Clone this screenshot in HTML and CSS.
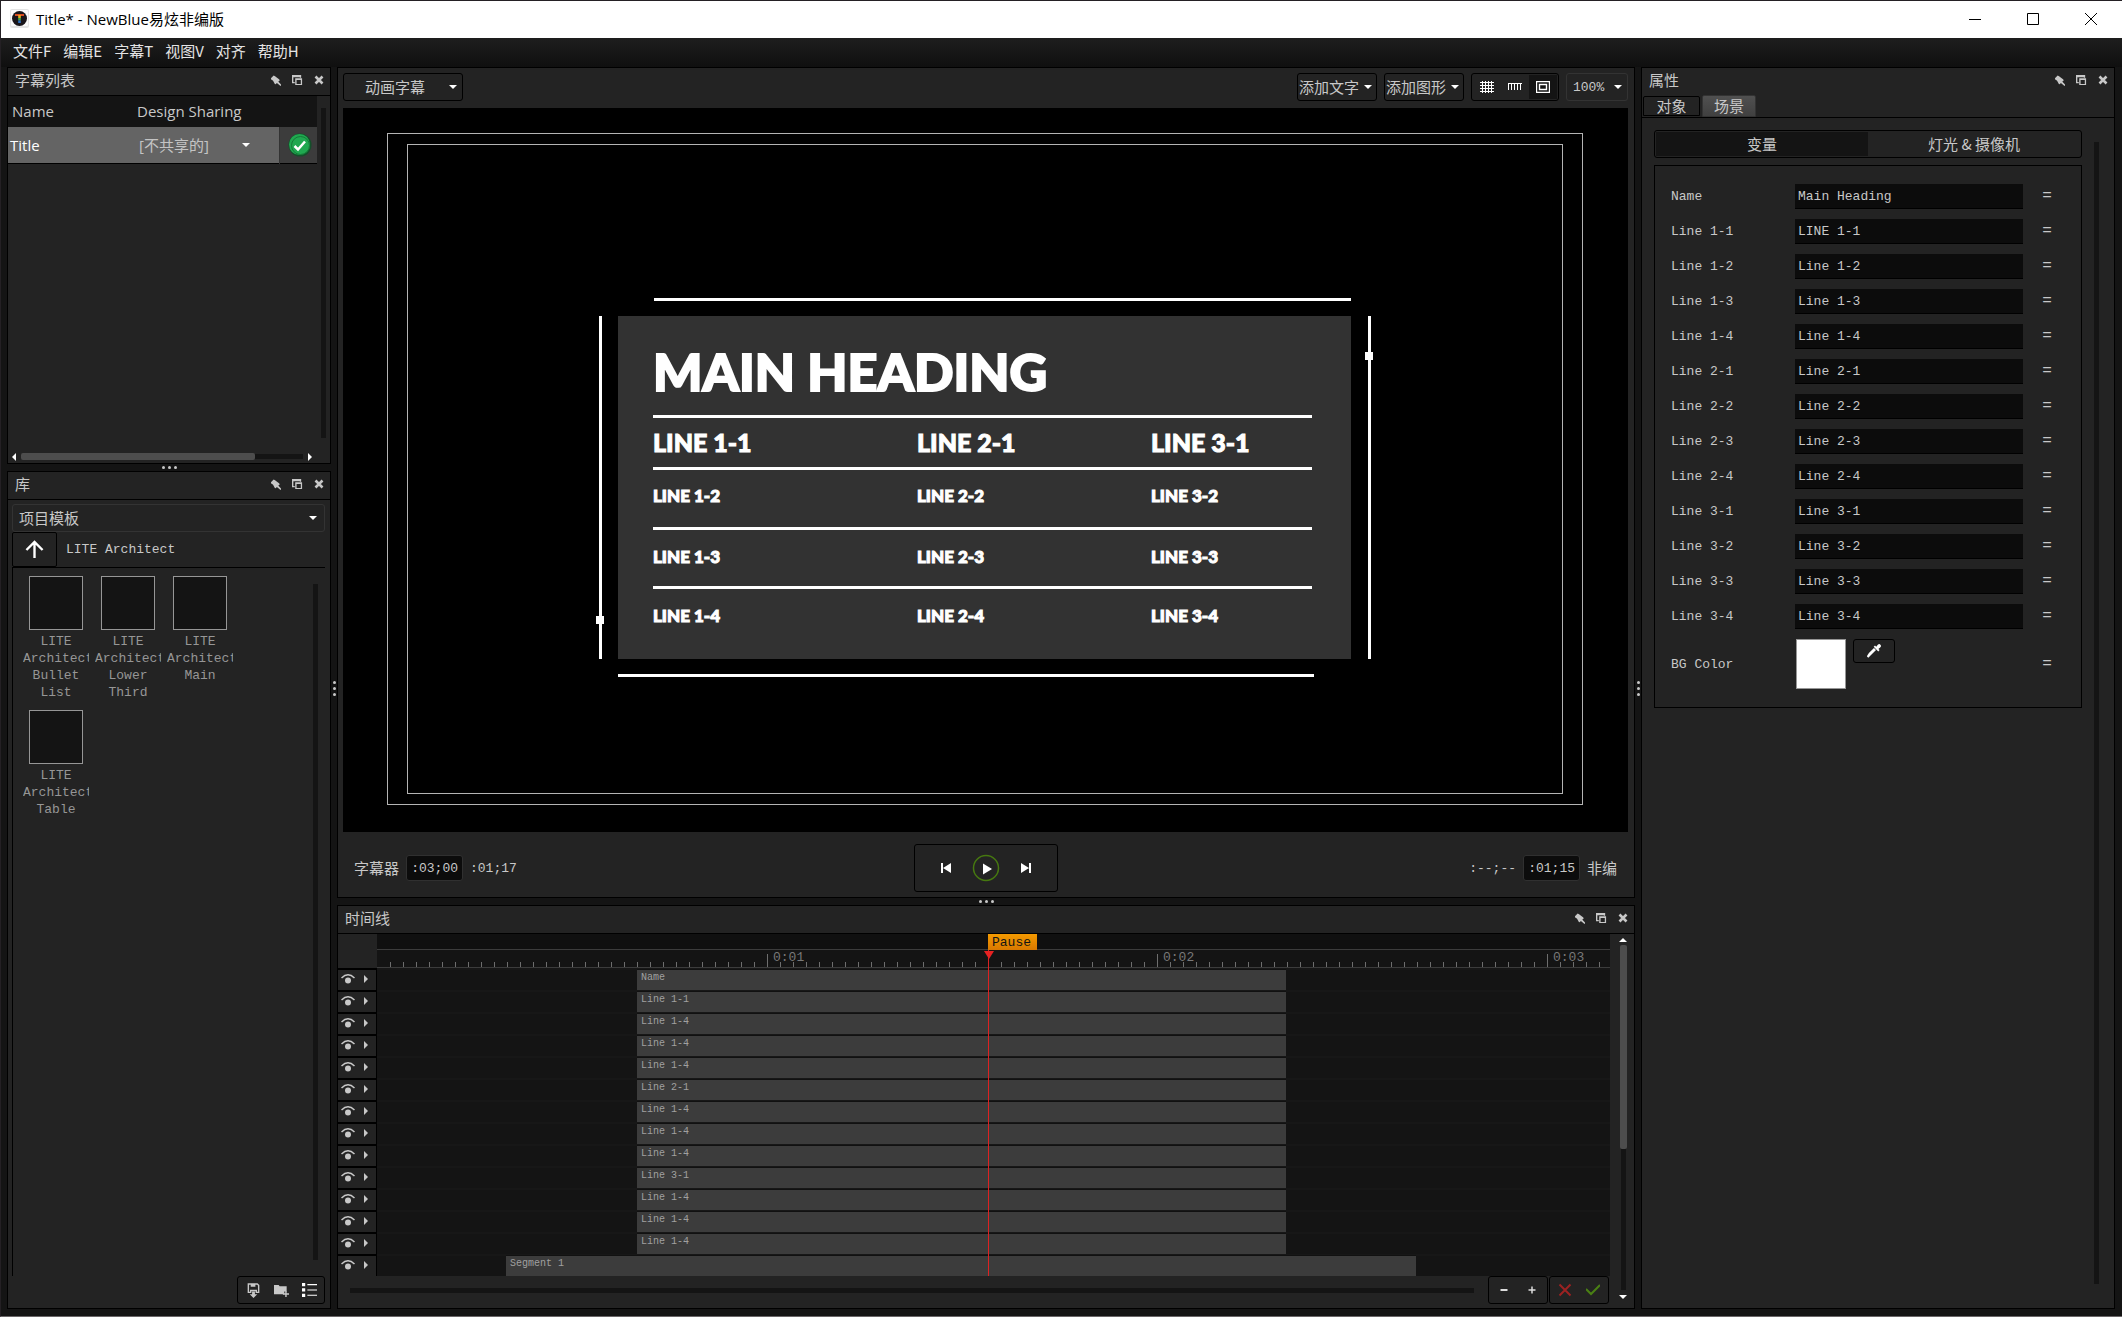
FILE: index.html
```html
<!DOCTYPE html>
<html lang="zh-CN">
<head>
<meta charset="utf-8">
<title>Title* - NewBlue易炫非编版</title>
<link rel="stylesheet" href="styles.css">
</head>
<body>
<svg class="sprite" aria-hidden="true">
  <symbol id="pin" viewBox="0 0 12 12"><path d="M1 3.500 4 .5l1.500.8 4.700 3.700.3 1.200-1.500 1L12.500 11l-1 1-4-3.200-1.300 1.200-.9-.3L3.200 5.900 1.500 5.300z"/></symbol>
  <symbol id="restore" viewBox="0 0 12 12"><path d="M0 0h10v3H8.500V2.500H1.500V7.500H3V9H0zM3.500 3.500H11V11H3.500zM5 5.500V9.700h4.600V5.500z" fill-rule="evenodd"/></symbol>
  <symbol id="close" viewBox="0 0 10 10"><path d="M1.500 1.500 8.500 8.500M8.500 1.500 1.500 8.500" stroke="currentColor" stroke-width="2.600"/></symbol>
  <symbol id="eye" viewBox="0 0 14 12"><path d="M.5 5Q7-1.500 13.500 5" fill="none" stroke="currentColor" stroke-width="1.500"/><circle cx="7" cy="7.500" r="3"/></symbol>
  <symbol id="tri-r" viewBox="0 0 4 8"><path d="M0 0 4 4 0 8z"/></symbol>
  <symbol id="tri-l" viewBox="0 0 4 8"><path d="M4 0 0 4 4 8z"/></symbol>
  <symbol id="tri-d" viewBox="0 0 8 4"><path d="M0 0h8L4 4z"/></symbol>
  <symbol id="tri-u" viewBox="0 0 8 4"><path d="M0 4h8L4 0z"/></symbol>
</svg>

<header class="titlebar">
  <svg class="logo" viewBox="0 0 19 19">
    <rect width="19" height="19" rx="2" fill="#e4e4e4"/><rect x="1" y="1" width="17" height="16" rx="1" fill="#fafafa"/>
    <circle cx="9.500" cy="9.500" r="7.500" fill="#191519"/>
    <path d="M5 5h9v2H5z" fill="#d84a20"/><path d="M8.200 6h2.600v3H8.200z" fill="#e8b020"/><path d="M8.200 9h2.600v2.500H8.200z" fill="#3fae49"/><path d="M8.200 11.500h2.600V14H8.200z" fill="#2d6fc4"/>
  </svg>
  <h1 class="apptitle">Title* - NewBlue易炫非编版</h1>
  <div class="winbtns">
    <button aria-label="最小化"><svg viewBox="0 0 12 12"><path d="M0 6.500h12"/></svg></button>
    <button aria-label="最大化"><svg viewBox="0 0 12 12"><path d="M.5.500h11v11H.5z"/></svg></button>
    <button aria-label="关闭"><svg viewBox="0 0 12 12"><path d="M0 0 12 12M12 0 0 12"/></svg></button>
  </div>
</header>

<nav class="menubar">
  <button>文件F</button><button>编辑E</button><button>字幕T</button><button>视图V</button><button>对齐</button><button>帮助H</button>
</nav>

<main class="workspace">
  <div class="column">
    <section class="panel titles">
      <header class="phead"><h2>字幕列表</h2><div class="ptools"><button aria-label="固定"><svg><use href="#pin"/></svg></button><button aria-label="浮动"><svg><use href="#restore"/></svg></button><button aria-label="关闭"><svg class="x"><use href="#close"/></svg></button></div></header>
      <div class="titlesbody">
        <table class="tlist">
          <thead><tr><th class="c1">Name</th><th colspan="2">Design Sharing</th></tr></thead>
          <tbody><tr><td class="c1">Title</td><td class="c2"><span class="drop"><select aria-label="Design Sharing"><option>[不共享的]</option></select><svg><use href="#tri-d"/></svg></span></td>
          <td class="c3"><svg viewBox="0 0 24 24"><circle cx="12" cy="12" r="11.500" fill="#14502a"/><circle cx="11.500" cy="11.500" r="10.500" fill="#20a850"/><circle cx="12.500" cy="12.500" r="9" fill="none" stroke="#157a38"/><path d="M6.500 13l3.500 3.500 7-8" fill="none" stroke="#fff" stroke-width="2.500"/></svg></td></tr></tbody>
        </table>
        <div class="vtrack"></div>
      </div>
      <div class="hscroll"><svg><use href="#tri-l"/></svg><div class="htrack"><div class="hthumb"></div></div><svg><use href="#tri-r"/></svg></div>
    </section>
    <div class="split"><i></i><i></i><i></i></div>
    <section class="panel library">
      <header class="phead"><h2>库</h2><div class="ptools"><button aria-label="固定"><svg><use href="#pin"/></svg></button><button aria-label="浮动"><svg><use href="#restore"/></svg></button><button aria-label="关闭"><svg class="x"><use href="#close"/></svg></button></div></header>
      <div class="libbody">
        <span class="drop libsel"><select aria-label="库"><option>项目模板</option></select><svg><use href="#tri-d"/></svg></span>
        <div class="path"><button aria-label="上一级"><svg viewBox="0 0 20 20"><path d="M10 19V2M1.500 10.500 10 2l8.500 8.500"/></svg></button><span>LITE Architect</span></div>
        <div class="shelf">
          <ul class="thumbs">
            <li><button></button><span>LITE Architect Bullet List</span></li>
            <li><button></button><span>LITE Architect Lower Third</span></li>
            <li><button></button><span>LITE Architect Main</span></li>
            <li><button></button><span>LITE Architect Table</span></li>
          </ul>
          <div class="vtrack"></div>
        </div>
        <div class="group libtools">
          <button aria-label="保存"><svg viewBox="0 0 14 16"><path d="M2 1h9l1.500 1.500V10H10V8H4v2H1.500V1z" fill="none" stroke="currentColor" stroke-width="1.500"/><path d="M4 1h5v3H4z"/><path d="M5.500 9h3v3H11l-4 4-4-4h2.500z"/></svg></button>
          <button aria-label="新建文件夹"><svg viewBox="0 0 16 14"><path d="M0 1h5l1 1.500h7.500V8H11v3H0z"/><path d="M12 7.500h1.500V10H16v1.500h-2.500V14H12v-2.500H9.500V10H12z"/></svg></button>
          <button aria-label="列表" class="on"><svg viewBox="0 0 14 14"><path d="M0 0h3v3H0zM5 1h9v1H5zM0 5h3v3H0zM5 6h9v1H5zM0 10h3v3H0zM5 11h9v1H5z"/></svg></button>
        </div>
      </div>
    </section>
  </div>

  <div class="split vert"><i></i><i></i><i></i></div>

  <div class="column">
    <section class="panel viewer">
      <div class="toolbar">
        <span class="drop mode"><select aria-label="模式"><option>动画字幕</option></select><svg><use href="#tri-d"/></svg></span>
        <button class="addbtn">添加文字<svg><use href="#tri-d"/></svg></button>
        <button class="addbtn">添加图形<svg><use href="#tri-d"/></svg></button>
        <div class="group guides">
          <button aria-label="网格"><svg viewBox="0 0 14 12"><path d="M2.500 0v12M5.500 0v12M8.500 0v12M11.500 0v12M0 1.500h14M0 4.500h14M0 7.500h14M0 10.500h14"/></svg></button>
          <button aria-label="标尺"><svg viewBox="0 0 14 12"><path d="M0 2.500h14M.5 2v7M3.500 2v7M6.500 2v7M9.500 2v7M12.500 2v7"/></svg></button>
          <button aria-label="安全框" class="pressed"><svg viewBox="0 0 14 12"><path d="M.5.500h13v11H.5zM3.500 3.500h7v5h-7z" stroke-width="1.400"/></svg></button>
        </div>
        <span class="drop zoom"><select aria-label="缩放"><option>100%</option></select><svg><use href="#tri-d"/></svg></span>
      </div>
      <div class="canvas">
        <div class="safe outer"></div><div class="safe inner"></div>
        <div class="artwork">
          <div class="bar top"></div>
          <div class="rail left"><b class="low"></b></div>
          <div class="card">
            <h3>MAIN HEADING</h3>
            <div class="cells first"><span>LINE 1-1</span><span>LINE 2-1</span><span>LINE 3-1</span></div>
            <div class="cells second"><span>LINE 1-2</span><span>LINE 2-2</span><span>LINE 3-2</span></div>
            <div class="cells"><span>LINE 1-3</span><span>LINE 2-3</span><span>LINE 3-3</span></div>
            <div class="cells"><span>LINE 1-4</span><span>LINE 2-4</span><span>LINE 3-4</span></div>
          </div>
          <div class="rail right"><b class="high"></b></div>
          <div class="bar bottom"></div>
        </div>
      </div>
      <div class="transport">
        <div class="times"><label for="t1">字幕器</label><input id="t1" value=":03;00"><span>:01;17</span></div>
        <div class="group play">
          <button aria-label="上一个"><svg viewBox="0 0 12 12"><path d="M1 1h2v10H1zM11 1v10L3 6z"/></svg></button>
          <button aria-label="播放" class="big"><svg viewBox="0 0 28 28"><circle cx="14" cy="14" r="12.500" fill="none" stroke="#467810" stroke-width="1.500"/><path d="M11 9.500l9 5.500-9 5.500z"/></svg></button>
          <button aria-label="下一个"><svg viewBox="0 0 12 12"><path d="M9 1h2v10H9zM1 1v10l8-5z"/></svg></button>
        </div>
        <div class="times end"><span>:--;--</span><input id="t2" value=":01;15"><label for="t2">非编</label></div>
      </div>
    </section>
    <div class="split"><i></i><i></i><i></i></div>
    <section class="panel timeline">
      <header class="phead"><h2>时间线</h2><div class="ptools"><button aria-label="固定"><svg><use href="#pin"/></svg></button><button aria-label="浮动"><svg><use href="#restore"/></svg></button><button aria-label="关闭"><svg class="x"><use href="#close"/></svg></button></div></header>
      <div class="tlbody">
        <div class="tlmain">
          <div class="rulerrow"><div class="corner"></div><div class="ruler"><div class="markers"></div><div class="ticks"><span>0:01</span><span>0:02</span><span>0:03</span></div></div></div>
          <div class="track"><div class="thead"><svg class="eye"><use href="#eye"/></svg><svg class="tri"><use href="#tri-r"/></svg></div><div class="lane"><div class="clip">Name</div></div></div>
          <div class="track"><div class="thead"><svg class="eye"><use href="#eye"/></svg><svg class="tri"><use href="#tri-r"/></svg></div><div class="lane"><div class="clip">Line 1-1</div></div></div>
          <div class="track"><div class="thead"><svg class="eye"><use href="#eye"/></svg><svg class="tri"><use href="#tri-r"/></svg></div><div class="lane"><div class="clip">Line 1-4</div></div></div>
          <div class="track"><div class="thead"><svg class="eye"><use href="#eye"/></svg><svg class="tri"><use href="#tri-r"/></svg></div><div class="lane"><div class="clip">Line 1-4</div></div></div>
          <div class="track"><div class="thead"><svg class="eye"><use href="#eye"/></svg><svg class="tri"><use href="#tri-r"/></svg></div><div class="lane"><div class="clip">Line 1-4</div></div></div>
          <div class="track"><div class="thead"><svg class="eye"><use href="#eye"/></svg><svg class="tri"><use href="#tri-r"/></svg></div><div class="lane"><div class="clip">Line 2-1</div></div></div>
          <div class="track"><div class="thead"><svg class="eye"><use href="#eye"/></svg><svg class="tri"><use href="#tri-r"/></svg></div><div class="lane"><div class="clip">Line 1-4</div></div></div>
          <div class="track"><div class="thead"><svg class="eye"><use href="#eye"/></svg><svg class="tri"><use href="#tri-r"/></svg></div><div class="lane"><div class="clip">Line 1-4</div></div></div>
          <div class="track"><div class="thead"><svg class="eye"><use href="#eye"/></svg><svg class="tri"><use href="#tri-r"/></svg></div><div class="lane"><div class="clip">Line 1-4</div></div></div>
          <div class="track"><div class="thead"><svg class="eye"><use href="#eye"/></svg><svg class="tri"><use href="#tri-r"/></svg></div><div class="lane"><div class="clip">Line 3-1</div></div></div>
          <div class="track"><div class="thead"><svg class="eye"><use href="#eye"/></svg><svg class="tri"><use href="#tri-r"/></svg></div><div class="lane"><div class="clip">Line 1-4</div></div></div>
          <div class="track"><div class="thead"><svg class="eye"><use href="#eye"/></svg><svg class="tri"><use href="#tri-r"/></svg></div><div class="lane"><div class="clip">Line 1-4</div></div></div>
          <div class="track"><div class="thead"><svg class="eye"><use href="#eye"/></svg><svg class="tri"><use href="#tri-r"/></svg></div><div class="lane"><div class="clip">Line 1-4</div></div></div>
          <div class="track"><div class="thead"><svg class="eye"><use href="#eye"/></svg><svg class="tri"><use href="#tri-r"/></svg></div><div class="lane"><div class="clip segment">Segment 1</div></div></div>
          <div class="playhead"><span class="flag">Pause</span><svg viewBox="0 0 12 8"><path d="M1 0h10L6 8z"/></svg></div>
          <div class="tlfoot">
            <div class="slider"></div>
            <div class="group"><button aria-label="缩小"><svg viewBox="0 0 14 14"><path d="M3.500 7h7" stroke="#ddd" stroke-width="2"/></svg></button><button aria-label="放大"><svg viewBox="0 0 14 14"><path d="M3.500 7h7M7 3.500v7" stroke="#ddd" stroke-width="1.500"/></svg></button></div>
            <div class="group"><button aria-label="取消"><svg viewBox="0 0 14 14"><path d="M1.500 1.500l11 11M12.500 1.500l-11 11" stroke="#9c2222" stroke-width="2" fill="none"/></svg></button><button aria-label="应用"><svg viewBox="0 0 14 14"><path d="M0 6l5 5 9-9" stroke="#4a8014" stroke-width="2" fill="none"/></svg></button></div>
          </div>
        </div>
        <div class="vscroll"><svg><use href="#tri-u"/></svg><div class="vt"><div class="vthumb"></div></div><svg><use href="#tri-d"/></svg></div>
      </div>
    </section>
  </div>

  <div class="split vert"><i></i><i></i><i></i></div>

  <section class="panel props">
    <header class="phead"><h2>属性</h2><div class="ptools"><button aria-label="固定"><svg><use href="#pin"/></svg></button><button aria-label="浮动"><svg><use href="#restore"/></svg></button><button aria-label="关闭"><svg class="x"><use href="#close"/></svg></button></div></header>
    <div class="tabs"><button>对象</button><button class="active">场景</button></div>
    <div class="propsbody">
      <div class="propscol">
        <div class="segmented"><button class="active">变量</button><button>灯光 &amp; 摄像机</button></div>
        <form class="vars">
          <label for="v1">Name</label><input id="v1" value="Main Heading"><button type="button">=</button>
          <label for="v2">Line 1-1</label><input id="v2" value="LINE 1-1"><button type="button">=</button>
          <label for="v3">Line 1-2</label><input id="v3" value="Line 1-2"><button type="button">=</button>
          <label for="v4">Line 1-3</label><input id="v4" value="Line 1-3"><button type="button">=</button>
          <label for="v5">Line 1-4</label><input id="v5" value="Line 1-4"><button type="button">=</button>
          <label for="v6">Line 2-1</label><input id="v6" value="Line 2-1"><button type="button">=</button>
          <label for="v7">Line 2-2</label><input id="v7" value="Line 2-2"><button type="button">=</button>
          <label for="v8">Line 2-3</label><input id="v8" value="Line 2-3"><button type="button">=</button>
          <label for="v9">Line 2-4</label><input id="v9" value="Line 2-4"><button type="button">=</button>
          <label for="v10">Line 3-1</label><input id="v10" value="Line 3-1"><button type="button">=</button>
          <label for="v11">Line 3-2</label><input id="v11" value="Line 3-2"><button type="button">=</button>
          <label for="v12">Line 3-3</label><input id="v12" value="Line 3-3"><button type="button">=</button>
          <label for="v13">Line 3-4</label><input id="v13" value="Line 3-4"><button type="button">=</button>
          <label for="bg">BG Color</label><div class="color"><button type="button" id="bg" class="swatch"></button><button type="button" class="dropper" aria-label="吸管"><svg viewBox="0 0 14 14"><path d="M8 1.500l1.200 1.200 1.600-2q1.500-1.200 2.600 0t0 2.600l-2 1.600 1.200 1.200-1.300 1.300-4.600-4.600z"/><path d="M8.500 5.500 3 11l-1.700 1.700-.500-.5L2.500 9.500 7.500 4.500" fill="none" stroke="currentColor" stroke-width="1.500"/></svg></button></div><button type="button">=</button>
        </form>
      </div>
      <div class="vtrack"></div>
    </div>
  </section>
</main>
</body>
</html>
```
FILE: styles.css
```css
* { box-sizing: border-box; }

:root {
  --bg: #141414;
  --panel: #232323;
  --text: #c8c8c8;
  --cjk: "Noto Sans CJK SC", sans-serif;
  --mono: "Liberation Mono", "Noto Sans CJK SC", monospace;
}

body {
  margin: 0;
  height: 100vh;
  display: flex;
  flex-direction: column;
  background: var(--bg);
  color: var(--text);
  font: 15px/20px var(--cjk);
  border: 1px solid #242024;
  border-right: 0;
  border-bottom-color: #6a6668;
  overflow: hidden;
}

button, input, select {
  font: inherit;
  color: inherit;
  background: none;
  border: 0;
  margin: 0;
  padding: 0;
  border-radius: 0;
}
svg { fill: currentColor; display: block; flex: none; }
h1, h2, h3, ul { margin: 0; padding: 0; font: inherit; list-style: none; }
.sprite { position: absolute; width: 0; height: 0; }

.titlebar {
  height: 37px;
  flex: none;
  display: flex;
  align-items: center;
  background: #fff;
  color: #000;
  padding: 0 2px 2px 9px;
}
.logo { width: 19px; height: 19px; margin-right: 7px; }
.apptitle { flex: 1; font: 15px/20px "Open Sans", "Noto Sans CJK SC", sans-serif; }
.winbtns { display: flex; }
.winbtns button { width: 58px; height: 35px; display: grid; place-items: center; }
.winbtns svg { width: 12px; height: 12px; fill: none; stroke: #000; }

.menubar {
  height: 29px;
  flex: none;
  display: flex;
  gap: 12px;
  align-items: center;
  padding: 0 12px 4px;
  background: linear-gradient(#1e1e1e, #0f0f0f);
  color: #e4e4e4;
}

.workspace {
  flex: 1;
  min-height: 0;
  display: grid;
  grid-template-columns: 324px 6px 1fr 6px 474px;
  padding: 0 7px 7px 6px;
}
.column { display: flex; flex-direction: column; min-height: 0; min-width: 0; }
.panel {
  background: var(--panel);
  border: 1px solid #000;
  display: flex;
  flex-direction: column;
  min-height: 0;
  min-width: 0;
}
.split { height: 7px; flex: none; display: flex; gap: 3px; justify-content: center; align-items: center; }
.split.vert { height: auto; flex-direction: column; }
.split i { width: 3px; height: 3px; border-radius: 50%; background: #c8c8c8; }

.phead {
  height: 28px;
  flex: none;
  display: flex;
  justify-content: space-between;
  align-items: center;
  padding: 0 6px 3px 7px;
  border-bottom: 1px solid #000;
}
.ptools { display: flex; gap: 11px; align-items: center; }
.ptools svg { width: 11px; height: 11px; }
.ptools svg.x { width: 10px; height: 10px; }

.drop {
  display: flex;
  align-items: center;
  border: 1px solid #000;
  border-radius: 3px;
  height: 28px;
  padding-right: 5px;
}
.drop select { appearance: none; flex: 1; min-width: 0; }
.drop svg, .addbtn svg { width: 8px; height: 4px; color: #fff; }
.group { display: flex; border: 1px solid #000; border-radius: 3px; height: 28px; padding: 1px; }
.group button { flex: 1; display: grid; place-items: center; }
.vtrack { width: 5px; background: var(--bg); }

/* Title list */
.titles { height: 397px; flex: none; }
.titlesbody { flex: 1; display: flex; justify-content: space-between; padding-right: 4px; align-items: flex-start; }
.titlesbody .vtrack { margin-top: 12px; height: 330px; }
.tlist { width: 309px; border-collapse: collapse; font: 15px/20px "Open Sans", "Noto Sans CJK SC", sans-serif; }
.tlist tr { height: 31px; background: var(--bg); }
.tlist tbody tr { height: 36px; background: #646464; color: #fff; border-bottom: 1px solid #000; }
.tlist th, .tlist td { padding: 0; text-align: left; font-weight: 400; }
.tlist th { padding-bottom: 2px; }
.tlist .c1 { width: 129px; padding-left: 4px; }
.tlist td.c1 { padding-left: 2px; }
.tlist .c2 { padding-left: 2px; }
.tlist .drop { border: 0; height: 20px; padding-right: 29px; color: #c4c4c4; }
.tlist td.c3 { width: 38px; background: #3c3c3c; border-left: 1px solid #333; padding-left: 8px; }
.c3 svg { width: 24px; height: 24px; }
.hscroll { height: 13px; margin-right: 13px; display: flex; align-items: center; gap: 5px; padding: 0 5px 0 4px; }
.hscroll svg { width: 4px; height: 8px; color: #fff; }
.htrack { flex: 1; height: 5px; background: var(--bg); display: flex; align-items: center; }
.hthumb { width: 83%; height: 7px; background: #4d4d4d; border-radius: 2px; }

/* Library */
.library { flex: 1; }
.libbody { flex: 1; display: flex; flex-direction: column; padding: 4px 5px 4px 4px; min-height: 0; }
.libsel { border-color: #333; padding: 0 7px 0 6px; flex: none; }
.path { display: flex; align-items: center; height: 36px; gap: 9px; border-bottom: 1px solid #000; font: 13px/17px var(--mono); flex: none; }
.path button { width: 45px; height: 35px; border: 1px solid #000; border-radius: 2px; display: grid; place-items: center; }
.path svg { width: 19px; height: 19px; fill: none; stroke: #fff; stroke-width: 2.5; }
.shelf { flex: 1; display: flex; border-left: 1px solid #000; padding: 8px 7px 16px 10px; }
.shelf .vtrack { margin-top: 8px; }
.thumbs { flex: 1; display: flex; flex-wrap: wrap; gap: 0 6px; align-content: flex-start; padding-right: 60px; }
.thumbs li { width: 66px; height: 134px; overflow: hidden; text-align: center; font: 13px/17px var(--mono); color: #969696; }
.thumbs button { display: block; width: 54px; height: 54px; margin: 0 6px 3px; background: var(--bg); border: 1px solid #969696; }
.libtools { width: 88px; align-self: flex-end; flex: none; }
.libtools svg { width: 15px; height: 15px; }
.libtools .on { color: #fff; }

/* Viewer */
.viewer { flex: 1; }
.toolbar { height: 40px; flex: none; display: flex; align-items: center; gap: 7px; padding: 0 6px 2px 5px; }
.mode { width: 120px; padding-left: 21px; margin-right: auto; }
.addbtn { display: flex; align-items: center; gap: 5px; height: 28px; width: 80px; padding-left: 1px; border: 1px solid #000; border-radius: 3px; white-space: nowrap; }
.guides { width: 88px; color: #fff; }
.guides svg { width: 14px; height: 12px; fill: none; stroke: currentColor; }
.guides .pressed { background: var(--bg); }
.zoom { width: 62px; border-color: #333; padding-left: 6px; font: 13px/17px var(--mono); }

.canvas { flex: 1; margin: 0 6px 0 5px; background: #000; position: relative; display: grid; place-items: center; padding: 34px 2px 0 0; min-height: 0; }
.safe { position: absolute; border: 1px solid #b4b4b4; }
.safe.outer { inset: 25px 45px 27px 44px; }
.safe.inner { inset: 36px 65px 38px 64px; }
.artwork { display: grid; grid-template-columns: 8px 733px 8px; column-gap: 14px; row-gap: 15px; }
.bar { grid-column: 2; height: 3px; background: #fff; }
.bar.top { grid-row: 1; margin-left: 36px; }
.bar.bottom { grid-row: 3; margin-right: 37px; }
.rail { grid-row: 2; background: linear-gradient(#fff, #fff) center / 3px 100% no-repeat; display: flex; flex-direction: column; }
.rail.left { grid-column: 1; }
.rail.right { grid-column: 3; }
.rail b { width: 8px; height: 8px; background: #fff; }
.rail .low { margin: auto 0 35px; }
.rail .high { margin-top: 36px; }
.card {
  grid-row: 2;
  grid-column: 2;
  height: 343px;
  background: #323232;
  padding: 21px 39px 0 35px;
  color: #fff;
  font-family: Lato, sans-serif;
  font-weight: 900;
  -webkit-text-stroke: 1px #fff;
}
.card h3 { font: 900 52px/68px Lato, sans-serif; height: 78px; white-space: nowrap; -webkit-text-stroke-width: 2px; }
.cells { height: 59px; padding-bottom: 2px; border-top: 3px solid #fff; display: grid; grid-template-columns: 264px 234px 1fr; align-items: center; font-size: 17px; line-height: 24px; white-space: nowrap; }
.cells.first { height: 52px; padding: 0; font-size: 25px; }
.cells.second { height: 60px; padding-bottom: 4px; }

.transport { height: 65px; flex: none; display: grid; grid-template-columns: 1fr 144px 1fr; align-items: center; padding: 7px 17px 0 16px; }
.times { display: flex; align-items: center; gap: 7px; }
.times.end { justify-content: flex-end; }
.times span, .times input { font: 13px/17px var(--mono); }
.times input { width: 57px; height: 26px; background: #0c0c0c; border: 1px solid #303030; border-radius: 3px; text-align: right; padding-right: 4px; }
.play { height: 48px; color: #fff; align-items: center; justify-content: center; }
.play button { flex: 0 0 40px; }
.play svg { width: 12px; height: 12px; }
.play .big svg { width: 28px; height: 28px; }

/* Timeline */
.timeline { height: 404px; flex: none; }
.tlbody { flex: 1; display: flex; min-height: 0; }
.tlmain { flex: 1; position: relative; display: flex; flex-direction: column; min-width: 0; }
.rulerrow { display: flex; height: 35px; flex: none; }
.corner { width: 39px; }
.ruler { flex: 1; background: var(--bg); }
.markers { height: 16px; background: #101010; border-bottom: 1px solid #3c3c3c; }
.ticks {
  height: 18px;
  border-bottom: 1px solid #3c3c3c;
  display: flex;
  padding-left: 390px;
  background: repeating-linear-gradient(90deg, transparent 0 12px, #6e6e6e 12px 13px) 1px bottom / 100% 5px no-repeat;
}
.ticks span { width: 390px; height: 13px; margin-top: 4px; padding-left: 5px; border-left: 1px solid #6e6e6e; font: 13px/8px var(--mono); color: #787878; }
.ticks span:last-child { width: 60px; }
.track { display: flex; height: 20px; margin-top: 1px; margin-bottom: 1px; flex: none; }
.thead { width: 39px; background: var(--panel); border-right: 1px solid #000; display: flex; align-items: center; gap: 9px; padding: 0 0 2px 3px; box-shadow: 0 -2px #000; }
.thead .eye { width: 14px; height: 12px; }
.thead .tri { width: 4px; height: 8px; }
.lane { flex: 1; background: var(--bg); box-shadow: 0 -2px #171717; padding-left: 260px; }
.clip { width: 649px; height: 20px; padding-left: 4px; background: #3c3c3c; box-shadow: 0 -1px #111; font: 10px/16px var(--mono); color: #a0a0a0; }
.clip.segment { width: 910px; margin-left: -131px; }
.tlfoot { flex: 1; display: flex; gap: 1px; padding: 0 1px 0 12px; background: var(--panel); z-index: 1; margin-top: -1px; }
.slider { flex: 1; height: 5px; margin: 12px 13px 0 0; background: var(--bg); }
.tlfoot .group { width: 60px; }
.tlfoot svg { width: 14px; height: 14px; }
.playhead { position: absolute; left: 650px; top: 0; bottom: 32px; border-left: 1px solid #dc2222; }
.playhead svg { width: 12px; height: 8px; margin-left: -6px; fill: #e62222; }
.flag { display: block; width: 49px; height: 16px; margin-left: -1px; margin-bottom: 1px; padding-left: 4px; background: linear-gradient(#f49a00, #d87800); color: #141414; font: 13px/17px var(--mono); }
.vscroll { width: 24px; flex: none; display: flex; flex-direction: column; align-items: center; padding: 4px 0 9px 2px; }
.vscroll svg { width: 8px; height: 4px; color: #fff; }
.vt { flex: 1; width: 5px; margin: 3px 0 5px; background: var(--bg); display: flex; justify-content: center; }
.vthumb { flex: none; width: 7px; height: 59%; background: #4d4d4d; border-radius: 2px; }

/* Properties */
.props .phead { border: 0; height: 27px; padding-bottom: 3px; }
.tabs { height: 23px; flex: none; display: flex; gap: 2px; border-bottom: 1px solid #000; padding-left: 1px; }
.tabs button { width: 57px; border: 1px solid #000; border-radius: 2px 2px 0 0; height: 20px; margin-top: 1px; line-height: 18px; }
.tabs .active { width: 54px; height: 22px; margin-top: 0; background: linear-gradient(#505050, #404040); border-color: #333; }
.propsbody { flex: 1; display: flex; gap: 12px; padding: 12px 15px 24px 12px; min-height: 0; }
.propscol { flex: 1; }
.propsbody .vtrack { margin-top: 12px; }
.segmented { display: flex; height: 28px; border: 1px solid #000; border-radius: 3px; padding: 1px; margin-bottom: 7px; }
.segmented button { flex: 1; }
.segmented .active { background: var(--bg); }
.vars { border: 1px solid #000; padding: 18px 24px 18px 16px; display: grid; grid-template-columns: 124px 1fr 20px; column-gap: 0; row-gap: 10px; align-items: center; font: 13px/17px var(--mono); }
.vars input { height: 25px; min-width: 0; margin-right: 14px; padding: 0 3px; background: #0c0c0c; border-bottom: 1px solid #000; }
.vars > button { font-size: 16px; }
.color { display: flex; gap: 7px; padding-left: 1px; align-items: flex-start; }
.swatch { width: 50px; height: 50px; background: #fff; border: 1px solid #969696; }
.dropper { width: 42px; height: 24px; border: 1px solid #000; border-radius: 3px; display: grid; place-items: center; color: #fff; }
.dropper svg { width: 14px; height: 14px; }
```
